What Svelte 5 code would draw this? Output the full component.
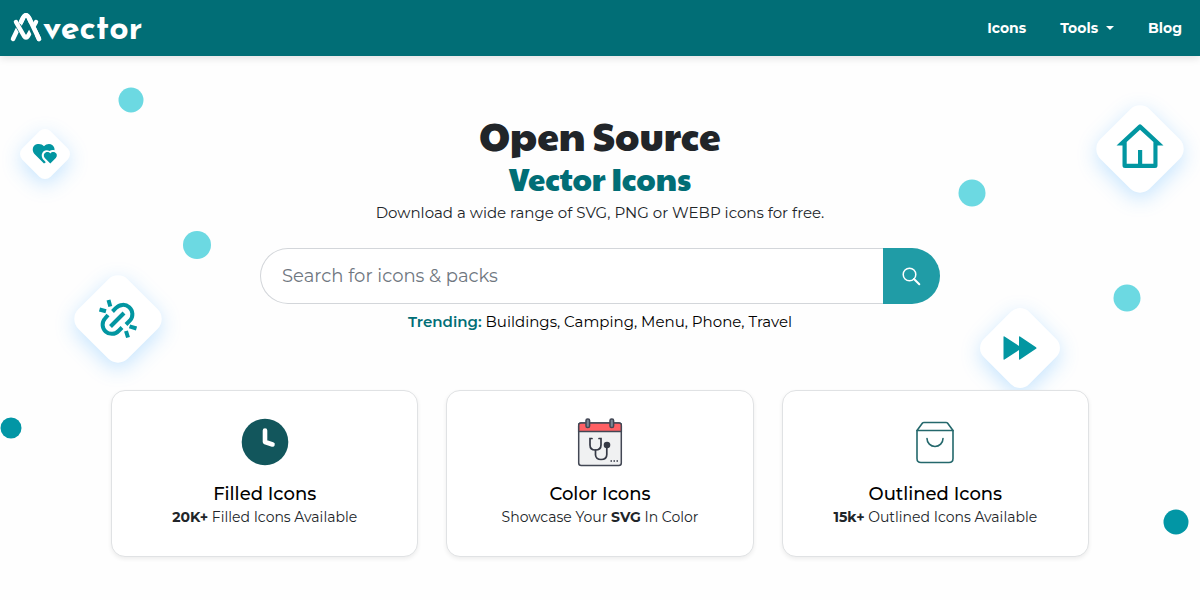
<script lang="ts">
	let query = '';

	const links = ['Buildings', 'Camping', 'Menu', 'Phone', 'Travel'];

	// x is a share of the hero width, y is measured from the top of the hero
	const dots = [
		{ x: 10.9, y: 44, size: 25, dark: false },
		{ x: 16.4, y: 189, size: 28, dark: false },
		{ x: 81, y: 137, size: 27, dark: false },
		{ x: 93.9, y: 242, size: 27, dark: false },
		{ x: 0.9, y: 372, size: 21, dark: true },
		{ x: 98, y: 466, size: 25, dark: true }
	];

	const tiles = [
		{ icon: 'heart', x: 3.75, y: 98, size: 40 },
		{ icon: 'link', x: 9.8, y: 263, size: 70 },
		{ icon: 'home', x: 95, y: 93, size: 70 },
		{ icon: 'forward', x: 85, y: 292, size: 64 }
	];
</script>

<header class="navbar">
	<a class="brand" href="/" aria-label="Avector">
		<svg width="32" height="30" viewBox="0 0 32 30" aria-hidden="true">
			<g fill="none" stroke="#fff" stroke-linecap="round" stroke-linejoin="round">
				<path d="M3 26 L13 5 Q16 -0.500 19 5 L29 26" stroke-width="4.500" />
				<path d="M6 9 L15 24" stroke="#016e76" stroke-width="6" />
				<path d="M26 9 L18 23" stroke="#016e76" stroke-width="5" />
				<path d="M6 9 L14 23 Q16 26 18 23 L26 9" stroke-width="4.500" />
				<path d="M20 13 L24 21" stroke="#016e76" stroke-width="5" />
				<path d="M11 9 L13 5 Q16 -0.500 19 5 L29 26" stroke-width="4.500" />
			</g>
		</svg>
		<span>vector</span>
	</a>
	<nav>
		<a href="/icons">Icons</a>
		<button type="button" class="dropdown" aria-haspopup="true">Tools</button>
		<a href="/blog">Blog</a>
	</nav>
</header>

<main class="hero">
	<div class="shapes" aria-hidden="true">
		{#each dots as dot}
			<span
				class="dot"
				class:dark={dot.dark}
				style="left: {dot.x}%; top: {dot.y}px; width: {dot.size}px; height: {dot.size}px"
			></span>
		{/each}

		{#each tiles as tile}
			<div
				class="tile"
				style="left: {tile.x}%; top: {tile.y}px; width: {tile.size}px; height: {tile.size}px"
			>
				{#if tile.icon === 'heart'}
					<svg width="26" height="22" viewBox="0 0 26 22" fill="#0296a1">
						<path d="M12 20.500 L2.500 11 C-0.500 7.500 0.500 2.500 4.500 1.300 C7.500 0.300 10 1.200 12 3.200 C14.500 0.800 18 0.400 20.500 2.300 C22.200 3.700 22.800 5.600 22.400 7.300 C20.800 6.700 19 7 17.500 8 C14.500 6.200 10.500 7.600 9.800 11.500 C9.400 14.200 10.700 16 12.500 17.800 L13.800 19.200 Z" />
						<path d="M18.300 20.500 L12.800 14.900 C11.200 13 11.600 10.400 13.600 9.500 C15.300 8.700 17.100 9.100 18.300 10.500 C19.500 9.100 21.400 8.700 23.100 9.500 C25.100 10.500 25.500 13 23.800 14.900 Z" />
					</svg>
				{:else if tile.icon === 'link'}
					<svg width="40" height="40" viewBox="0 0 40 40" fill="none" stroke="#0296a1" stroke-width="4">
						<path d="M14.500 12.500 L18 9 A9.200 9.200 0 0 1 32 21.500 L28 25.500" />
						<path d="M10 16 L7 19.500 A9.200 9.200 0 0 0 20.500 32 L24 28.500" />
						<path d="M12.500 27.500 L26 14" />
						<path d="M10.500 1 L12.300 7.500 M1.500 10.500 L8 12.300 M28 32 L30 38.500 M31.500 27.300 L38.500 29.500" />
					</svg>
				{:else if tile.icon === 'home'}
					<svg width="48" height="50" viewBox="0 0 48 50" fill="#0296a1">
						<path fill-rule="evenodd" d="M22.500 1 Q24 -0.300 25.500 1 L47.500 21.500 H41.500 V41.500 Q41.500 44 39 44 H9 Q6.500 44 6.500 41.500 V21.500 H0.500 Z M24 5.800 L10.700 18 V39.800 H22 V26 H26.200 V39.800 H37.400 V18 Z" />
					</svg>
				{:else}
					<svg width="34" height="24" viewBox="0 0 34 24" fill="#0296a1">
						<path d="M0.500 1 Q0.500 0 1.500 0.500 L16 10 V1 Q16 0 17 0.500 L33 11.200 Q34 12 33 12.800 L17 23.500 Q16 24 16 23 V14 L1.500 23.500 Q0.500 24 0.500 23 Z" />
					</svg>
				{/if}
			</div>
		{/each}
	</div>

	<h1>Open Source</h1>
	<h2>Vector Icons</h2>
	<p class="lead">Download a wide range of SVG, PNG or WEBP icons for free.</p>

	<form class="search" on:submit|preventDefault>
		<input
			type="text"
			aria-label="Search for icons and packs"
			placeholder="Search for icons & packs"
			bind:value={query}
		/>
		<button type="submit" aria-label="Search">
			<svg width="19" height="19" viewBox="0 0 19 19" fill="none" stroke="#fff">
				<circle cx="7.500" cy="7.500" r="6.300" stroke-width="1.500" />
				<path d="M12 12 L17.300 17.300" stroke-width="2" stroke-linecap="round" />
			</svg>
		</button>
	</form>

	<p class="trending">
		<strong>Trending:</strong>
		{#each links as link, i}
			<a href="/search/{link.toLowerCase()}">{link}</a>{i < links.length - 1 ? ', ' : ''}
		{/each}
	</p>

	<section class="cards">
		<a class="card" href="/filled">
			<svg width="48" height="56" viewBox="0 0 48 56" aria-hidden="true">
				<circle cx="24" cy="28" r="23.300" fill="#12565c" />
				<path d="M24 16.500 V28 L31.500 30.500" fill="none" stroke="#fff" stroke-width="4.600" stroke-linecap="round" stroke-linejoin="round" />
			</svg>
			<h3>Filled Icons</h3>
			<p><b>20K+</b> Filled Icons Available</p>
		</a>

		<a class="card" href="/color">
			<svg width="48" height="56" viewBox="0 0 48 56" aria-hidden="true">
				<g stroke="#424754" stroke-width="1.500">
					<rect x="2.700" y="9" width="42.600" height="42.500" rx="2.500" fill="#f0f1f2" />
					<path d="M2.700 17.500 V11 Q2.700 9 5 9 H43 Q45.300 9 45.300 11 V17.500 Z" fill="#ff6064" />
					<rect x="10" y="5" width="3.600" height="8.500" rx="1.600" fill="#7b8794" />
					<rect x="34" y="5" width="3.600" height="8.500" rx="1.600" fill="#7b8794" />
				</g>
				<g fill="none" stroke="#353945" stroke-width="1.700" stroke-linecap="round">
					<path d="M16 24.500 H14 V31 Q14 36 19.300 36 Q25 36 25 31 V24.500 H23" />
					<path d="M19.500 36 V41 Q20 45.500 25 45.500 Q30.800 45.500 30.800 40.500 V34" />
				</g>
				<circle cx="31" cy="31" r="3.300" fill="#353945" />
				<path d="M34.500 47 H42.500" stroke="#353945" stroke-width="1.500" stroke-dasharray="1.500 1.500" />
			</svg>
			<h3>Color Icons</h3>
			<p>Showcase Your <b>SVG</b> In Color</p>
		</a>

		<a class="card" href="/outlined">
			<svg width="48" height="56" viewBox="0 0 48 56" fill="none" stroke="#24686c" stroke-width="1.600" stroke-linejoin="round" stroke-linecap="round" aria-hidden="true">
				<path d="M6 16.500 L11.500 9 Q12 8.500 13 8.500 H35 Q36 8.500 36.500 9 L42 16.500" />
				<path d="M6 16.500 H42 V44.500 Q42 48.500 38 48.500 H10 Q6 48.500 6 44.500 Z" />
				<path d="M16 24.500 A8 8 0 0 0 32 24.500" />
			</svg>
			<h3>Outlined Icons</h3>
			<p><b>15k+</b> Outlined Icons Available</p>
		</a>
	</section>
</main>

<style>
	:global(body) {
		background: #fefefe;
		color: #212529;
		font-family: Montserrat, Inter, sans-serif;
		overflow-x: hidden;
	}

	.navbar {
		position: relative;
		z-index: 1;
		display: flex;
		align-items: center;
		justify-content: space-between;
		height: 56px;
		padding: 0 18px 0 10px;
		background: #016e76;
		box-shadow: 0 2px 8px rgba(0, 0, 0, 0.12);
	}

	.brand {
		display: flex;
		align-items: center;
		gap: 1px;
		color: #fff;
		font-family: 'Josefin Sans', Lato, sans-serif;
		font-size: 34px;
		font-weight: 700;
		line-height: 32px;
		text-decoration: none;
	}

	.brand span {
		padding-top: 6px;
	}

	nav {
		display: flex;
		align-items: center;
		gap: 34px;
	}

	nav a,
	.dropdown {
		display: flex;
		align-items: center;
		gap: 8px;
		padding: 0;
		border: 0;
		background: none;
		color: #fff;
		font: inherit;
		font-size: 14px;
		font-weight: 700;
		line-height: 24px;
		text-decoration: none;
		cursor: pointer;
	}

	.dropdown::after {
		content: '';
		border-top: 4px solid #fff;
		border-left: 4px solid transparent;
		border-right: 4px solid transparent;
	}

	.hero {
		position: relative;
		padding: 57px 16px 44px;
		text-align: center;
	}

	.shapes {
		position: absolute;
		inset: 0;
		pointer-events: none;
	}

	.dot,
	.tile {
		position: absolute;
		transform: translate(-50%, -50%);
	}

	.dot {
		border-radius: 50%;
		background: #6cd9e2;
	}

	.dot.dark {
		background: #0296a5;
	}

	.tile {
		display: flex;
		align-items: center;
		justify-content: center;
	}

	.tile::before {
		content: '';
		position: absolute;
		inset: 0;
		border-radius: 20%;
		background: #fff;
		box-shadow: 4px 4px 20px rgba(50, 160, 255, 0.28);
		transform: rotate(45deg);
	}

	.tile svg {
		position: relative;
	}

	h1,
	h2 {
		position: relative;
		margin: 0;
		font-family: 'Paytone One', 'Open Sans', sans-serif;
		font-weight: 500;
	}

	h1 {
		font-size: 39px;
		line-height: 44px;
	}

	h2 {
		color: #016e76;
		font-size: 31px;
		line-height: 42px;
	}

	.lead {
		position: relative;
		margin: 2px 0 0;
		font-size: 15px;
		line-height: 24px;
	}

	.search {
		position: relative;
		display: flex;
		max-width: 680px;
		height: 56px;
		margin: 23px auto 6px;
	}

	.search input {
		flex: 1;
		min-width: 0;
		box-sizing: border-box;
		padding: 0 21px;
		border: 1px solid #d3d6da;
		border-right: 0;
		border-radius: 28px 0 0 28px;
		background: #fff;
		color: #212529;
		font: inherit;
		font-size: 18px;
	}

	.search input::placeholder {
		color: #6f777f;
		opacity: 1;
	}

	.search button {
		display: flex;
		align-items: center;
		justify-content: center;
		width: 57px;
		padding: 0;
		border: 0;
		border-radius: 0 28px 28px 0;
		background: #209ca6;
		cursor: pointer;
	}

	.trending {
		position: relative;
		margin: 0;
		color: #000;
		font-size: 15px;
		line-height: 24px;
	}

	.trending strong {
		color: #016e76;
		font-weight: 600;
	}

	.trending a {
		color: inherit;
		text-decoration: none;
	}

	.cards {
		position: relative;
		display: grid;
		grid-template-columns: repeat(3, 1fr);
		gap: 28px;
		max-width: 978px;
		margin: 56px auto 0;
	}

	.card {
		padding: 23px 16px 27px;
		border: 1px solid #e0e2e4;
		border-radius: 14px;
		background: #fff;
		box-shadow: 0 2px 4px rgba(0, 0, 0, 0.07);
		color: #212529;
		text-decoration: none;
	}

	.card svg {
		display: block;
		margin: 0 auto 13px;
	}

	.card h3 {
		margin: 0;
		color: #000;
		font-size: 18px;
		font-weight: 500;
		line-height: 22px;
	}

	.card p {
		margin: 0;
		font-size: 14px;
		line-height: 24px;
	}

	@media (max-width: 768px) {
		.shapes {
			display: none;
		}

		.cards {
			grid-template-columns: 1fr;
		}
	}
</style>
